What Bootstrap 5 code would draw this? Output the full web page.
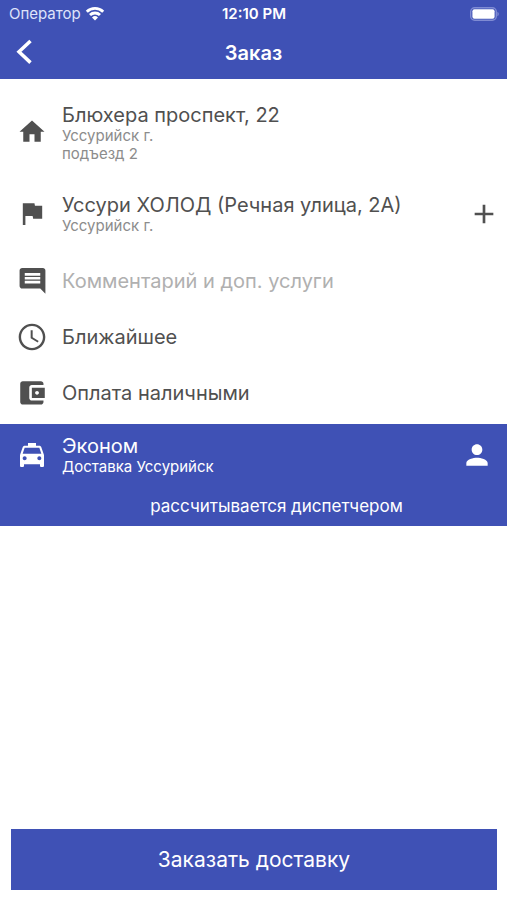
<!DOCTYPE html>
<html lang="ru">
<head>
<meta charset="utf-8">
<meta name="viewport" content="width=device-width, initial-scale=1">
<title>Заказ</title>
<link href="https://cdn.jsdelivr.net/npm/bootstrap@5.3.0/dist/css/bootstrap.min.css" rel="stylesheet">
<style>
:root { --brand: #3f51b5; --ink: #505050; }
body { font-family: Inter, "Liberation Sans", sans-serif; color: var(--ink); background: #fff; }
.brand-bg { background: var(--brand); color: #fff; }
.status-bar { font-size: 15px; line-height: 27px; padding: 0 8px 0 9px; }
.status-carrier { color: #dfe3fa; }
.status-time { font-weight: 600; }
.side { flex: 1 1 0; }
.title-bar { height: 52px; padding: 0 12px; }
.title-bar h1 { font-size: 20px; line-height: 24px; font-weight: 600; }
.icon-btn { color: inherit; background: none; border: 0; padding: 0; line-height: 0; }
.order-list { padding-top: 9px; }
.order-row { padding: 15px 7px 15px 0; }
.order-options { padding: 3px 0; }
.option-row { height: 56px; }
.icon-cell { width: 62px; flex: none; padding-left: 16px; line-height: 0; }
.icon-cell svg { display: block; }
.icon-box { width: 32px; display: flex; justify-content: center; }
.line-main { font-size: 20px; line-height: 24px; }
.line-sub { font-size: 15px; line-height: 18px; color: #8c8c8c; }
.comment-input { border: 0; outline: 0; padding: 0; background: none; color: inherit; }
.comment-input::placeholder { color: #b0b0b0; opacity: 1; }
.tariff { padding: 10px 14px 8px 0; }
.tariff .line-sub { color: inherit; }
.price { font-size: 17px; line-height: 24px; padding: 18px 0 0 60px; }
.order-btn { font-size: 21px; line-height: 24px; padding: 19px 0 18px; border: 0; }
.order-footer { padding: 0 10px 10px 11px; }
</style>
<script src="https://cdn.jsdelivr.net/npm/bootstrap@5.3.0/dist/js/bootstrap.bundle.min.js"></script>
</head>
<body class="d-flex flex-column min-vh-100">
<header class="brand-bg">
  <div class="status-bar d-flex align-items-center">
    <div class="side d-flex align-items-center gap-1">
      <span class="status-carrier">Оператор</span>
      <svg width="20" height="15" viewBox="0 0 20 15" fill="none" stroke="#fff" stroke-width="2.9" aria-hidden="true"><path d="M1.8 5.7a11.800 11.800 0 0 1 16.400 0M5 9a7.200 7.200 0 0 1 10 0"/><path d="M10 14.500l-3-3a4.300 4.300 0 0 1 6 0z" fill="#fff" stroke="none"/></svg>
    </div>
    <span class="status-time">12:10 PM</span>
    <div class="side d-flex justify-content-end">
      <svg width="29" height="14" viewBox="0 0 29 14" aria-hidden="true"><rect x=".7" y=".7" width="25.600" height="12.600" rx="4" fill="none" stroke="#7f8bd3" stroke-width="1.400"/><rect x="2.400" y="2.300" width="22.200" height="9.400" rx="2" fill="#fff"/><path d="M27.400 4.700c1.800.9 1.800 3.700 0 4.600z" fill="#7f8bd3"/></svg>
    </div>
  </div>
  <div class="title-bar d-flex align-items-center">
    <div class="side"><button class="icon-btn" type="button" aria-label="Назад"><svg width="24" height="30" viewBox="0 0 24 30" fill="none" stroke="#fff" stroke-width="3.500"><path d="M18.500 3L7 13.800l11.500 10.800"/></svg></button></div>
    <h1 class="m-0">Заказ</h1>
    <div class="side"></div>
  </div>
</header>
<main class="flex-grow-1">
  <div class="order-list">
    <div class="order-row d-flex align-items-center">
      <div class="icon-cell"><div class="icon-box"><svg width="30" height="30" viewBox="0 0 24 24" fill="currentColor" aria-hidden="true"><path d="M10 19v-6h4v6h5v-8h3L12 2 2 11h3v8z"/></svg></div></div>
      <div class="flex-grow-1">
        <div class="line-main">Блюхера проспект, 22</div>
        <div class="line-sub">Уссурийск г.</div>
        <div class="line-sub">подъезд 2</div>
      </div>
    </div>
    <div class="order-row d-flex align-items-center">
      <div class="icon-cell"><div class="icon-box"><svg width="31" height="31" viewBox="0 0 24 24" fill="currentColor" aria-hidden="true"><path d="M13.900 5.200L13.500 3.200H4.500v17h2v-7h5.600l.4 2h7v-10z"/></svg></div></div>
      <div class="flex-grow-1">
        <div class="line-main">Уссури ХОЛОД (Речная улица, 2А)</div>
        <div class="line-sub">Уссурийск г.</div>
      </div>
      <button class="icon-btn" type="button" aria-label="Добавить адрес"><svg width="32" height="32" viewBox="0 0 24 24" fill="currentColor"><path d="M19 13h-6v6h-2v-6H5v-2h6V5h2v6h6v2z"/></svg></button>
    </div>
    <div class="order-options">
      <div class="option-row d-flex align-items-center">
        <label class="icon-cell" for="comment" aria-label="Комментарий"><span class="icon-box"><svg width="31" height="31" viewBox="0 0 24 24" fill="currentColor" aria-hidden="true"><path d="M21.990 3.500c0-1.100-.89-2-1.990-2H4c-1.100 0-2 .9-2 2v12c0 1.100.9 2 2 2h14l4 4-.01-18zM18 13.500H6v-2h12v2zm0-3H6v-2h12v2zm0-3H6v-2h12v2z"/></svg></span></label>
        <input id="comment" class="comment-input line-main flex-grow-1" type="text" placeholder="Комментарий и доп. услуги">
      </div>
      <div class="option-row d-flex align-items-center">
        <div class="icon-cell"><div class="icon-box"><svg width="32" height="32" viewBox="0 0 24 24" fill="currentColor" aria-hidden="true"><path d="M11.990 2C6.470 2 2 6.480 2 12s4.470 10 9.990 10C17.520 22 22 17.520 22 12S17.520 2 11.990 2zM12 20.200c-4.500 0-8.200-3.700-8.200-8.200S7.500 3.800 12 3.800s8.200 3.700 8.200 8.200-3.700 8.200-8.200 8.200zM12.500 7H11v6l5.250 3.150.75-1.230-4.500-2.670z"/></svg></div></div>
        <div class="line-main">Ближайшее</div>
      </div>
      <div class="option-row d-flex align-items-center">
        <div class="icon-cell"><div class="icon-box"><svg width="31" height="31" viewBox="0 0 24 24" fill="currentColor" aria-hidden="true"><path d="M20.500 17.500v1c0 1.100-.9 2-2 2h-14c-1.110 0-2-.9-2-2v-14c0-1.100.89-2 2-2h14c1.100 0 2 .9 2 2v1h-9c-1.110 0-2 .9-2 2v8c0 1.100.89 2 2 2h9zm-9-2h10v-8h-10v8zm4-2.500c-.83 0-1.500-.67-1.500-1.500s.67-1.500 1.500-1.500 1.500.67 1.500 1.500-.67 1.500-1.500 1.500z"/></svg></div></div>
        <div class="line-main">Оплата наличными</div>
      </div>
    </div>
  </div>
  <section class="tariff brand-bg">
    <div class="d-flex align-items-center">
      <div class="icon-cell"><div class="icon-box"><svg width="32" height="32" viewBox="0 0 24 24" fill="currentColor" aria-hidden="true"><path d="M18.920 6.010C18.720 5.420 18.160 5 17.500 5H15V3H9v2H6.500c-.66 0-1.210.42-1.420 1.010L3 12v8c0 .55.45 1 1 1h1c.55 0 1-.45 1-1v-1h12v1c0 .55.45 1 1 1h1c.55 0 1-.45 1-1v-8l-2.080-5.990zM6.500 16c-.83 0-1.500-.67-1.500-1.500S5.670 13 6.500 13s1.500.67 1.500 1.500S7.330 16 6.500 16zm11 0c-.83 0-1.500-.67-1.500-1.500s.67-1.500 1.500-1.500 1.500.67 1.500 1.500-.67 1.500-1.500 1.500zM5 11l1.500-4.500h11L19 11H5z"/></svg></div></div>
      <div class="flex-grow-1">
        <div class="line-main">Эконом</div>
        <div class="line-sub">Доставка Уссурийск</div>
      </div>
      <button class="icon-btn" type="button" aria-label="Пассажир"><svg width="32" height="32" viewBox="0 0 24 24" fill="currentColor"><path d="M12 12c2.210 0 4-1.790 4-4s-1.790-4-4-4-4 1.790-4 4 1.790 4 4 4zm0 2c-2.670 0-8 1.340-8 4v2h16v-2c0-2.660-5.330-4-8-4z"/></svg></button>
    </div>
    <div class="price text-center">рассчитывается диспетчером</div>
  </section>
</main>
<footer class="order-footer">
  <button class="order-btn brand-bg w-100" type="button">Заказать доставку</button>
</footer>
</body>
</html>
